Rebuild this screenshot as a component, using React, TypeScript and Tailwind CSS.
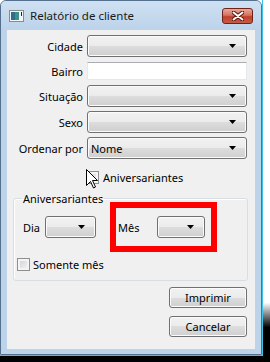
import React from 'react';

const font = "font-['Noto_Sans',sans-serif] text-[11px] leading-[15px] text-black";

function Combo({ w, value }: { w: string; value?: string }) {
  return (
    <div
      className={`${w} h-[22px] flex items-center rounded-[3px] border border-[#707070] bg-[linear-gradient(#f2f2f2_0%,#ebebeb_50%,#dddddd_50%,#cfcfcf_100%)] shadow-[inset_0_0_0_1px_#fbfbfb]`}
    >
      <span className="flex-1 pl-[3px]">{value}</span>
      <svg width="7" height="4" viewBox="0 0 7 4" className="mr-[10px]">
        <path d="M0 0H7L3.5 4Z" fill="#000" />
      </svg>
    </div>
  );
}

function Check() {
  return (
    <div className="w-[13px] h-[13px] border border-[#8e8f8f] bg-[linear-gradient(135deg,#cbcfd5,#f7f7f7)] shadow-[inset_0_0_0_2px_#f4f4f4]" />
  );
}

function Button({ label }: { label: string }) {
  return (
    <div className="w-[78px] h-[21px] flex items-center justify-center rounded-[3px] border border-[#707070] bg-[linear-gradient(#f2f2f2_0%,#ebebeb_50%,#dddddd_50%,#cfcfcf_100%)] shadow-[inset_0_0_0_1px_#fbfbfb]">
      {label}
    </div>
  );
}

function Row({ label, children, className }: { label: string; children: React.ReactNode; className?: string }) {
  return (
    <div className={`flex items-center ${className ?? ''}`}>
      <span className="w-[76px] text-right">{label}</span>
      <div className="ml-[4px]">{children}</div>
    </div>
  );
}

export default function App() {
  return (
    <div className={`w-[270px] h-[362px] bg-white flex flex-col ${font}`}>
      <div className="flex">
        <div className="w-[263px] h-[356px] flex flex-col border-r border-b border-[#3cc3ec]">
          <div className="flex-1 flex flex-col rounded-t-[6px] border border-[#54708f] bg-[#bcd3ea] px-[6px] pb-[5px]">
            {/* title bar */}
            <div className="h-[29px] flex items-center bg-[linear-gradient(#cfe0f2,#bcd3ea)] -mx-[6px] px-[8px] rounded-t-[5px]">
              <svg width="15" height="12" viewBox="0 0 15 12" className="mt-[1px]">
                <rect x="0.5" y="0.5" width="14" height="11" fill="#f4f4f4" stroke="#8a8a8a" />
                <rect x="2" y="2" width="8" height="8" fill="#3f8f8a" />
                <rect x="2" y="2" width="4" height="8" fill="#2f6f8a" />
                <rect x="12" y="2" width="1" height="4" fill="#222" />
              </svg>
              <span className="ml-[6px] text-[11.5px] text-[#1a1a1a]">Relatório de cliente</span>
              <div className="ml-auto mt-[1px] w-[31px] h-[16px] rounded-[3px] border border-[#6d2318] bg-[linear-gradient(#e9a99b_0%,#d4715f_45%,#c0402c_55%,#c85a44_100%)] flex items-center justify-center">
                <svg width="12" height="10" viewBox="0 0 12 10">
                  <path d="M1.5 1.5L10.5 8.5M10.5 1.5L1.5 8.5" stroke="#5a1a10" strokeWidth="4" strokeLinecap="round" />
                  <path d="M1.5 1.5L10.5 8.5M10.5 1.5L1.5 8.5" stroke="#fff" strokeWidth="2" strokeLinecap="round" />
                </svg>
              </div>
            </div>

            {/* content */}
            <div className="flex-1 bg-[#f0f0f0] flex flex-col pt-[5px]">
              <Row label="Cidade">
                <Combo w="w-[160px]" />
              </Row>
              <Row label="Bairro" className="mt-[5px]">
                <div className="w-[160px] h-[18px] bg-white border border-[#e3e9ef] border-t-[#abadb3]" />
              </Row>
              <Row label="Situação" className="mt-[5px]">
                <Combo w="w-[160px]" />
              </Row>
              <Row label="Sexo" className="mt-[4px]">
                <Combo w="w-[160px]" />
              </Row>
              <Row label="Ordenar por" className="mt-[4px]">
                <Combo w="w-[160px]" value="Nome" />
              </Row>

              <div className="mt-[11px] ml-[79px] flex items-center">
                <div className="relative">
                  <Check />
                  <svg width="12" height="20" viewBox="0 0 12 20" className="absolute left-0 -top-[2px]">
                    <path d="M0.5 0.5V16.5L4.5 12.5L7.5 19L9.5 18L6.5 11.5H11.5Z" fill="#fff" stroke="#000" strokeWidth="1" strokeLinejoin="miter" />
                  </svg>
                </div>
                <span className="ml-[4px]">Aniversariantes</span>
              </div>

              <fieldset className="mt-[6px] ml-[6px] w-[235px] h-[90px] border border-[#d5dfe5] rounded-[3px] shadow-[inset_1px_1px_0_#fff]">
                <legend className="ml-[8px] px-[1px] leading-[15px]">Aniversariantes</legend>
                <div className="-mt-[4px] flex items-center">
                  <span className="ml-[9px] w-[22px]">Dia</span>
                  <Combo w="w-[51px]" />
                  <div className="ml-[14px] w-[107px] h-[50px] border-[6px] border-[#ff0000] flex items-center">
                    <span className="ml-[2px] w-[39px]">Mês</span>
                    <Combo w="w-[48px]" />
                  </div>
                </div>
                <div className="mt-[5px] ml-[3px] flex items-center">
                  <Check />
                  <span className="ml-[3px]">Somente mês</span>
                </div>
              </fieldset>

              <div className="mt-[6px] ml-[162px] flex flex-col gap-[8px]">
                <Button label="Imprimir" />
                <Button label="Cancelar" />
              </div>
            </div>
          </div>
        </div>
        <div className="flex-1 bg-[linear-gradient(#ffffff_0%,#ffffff_85%,#000000_92%)]" />
      </div>
      <div className="flex-1 bg-black" />
    </div>
  );
}
